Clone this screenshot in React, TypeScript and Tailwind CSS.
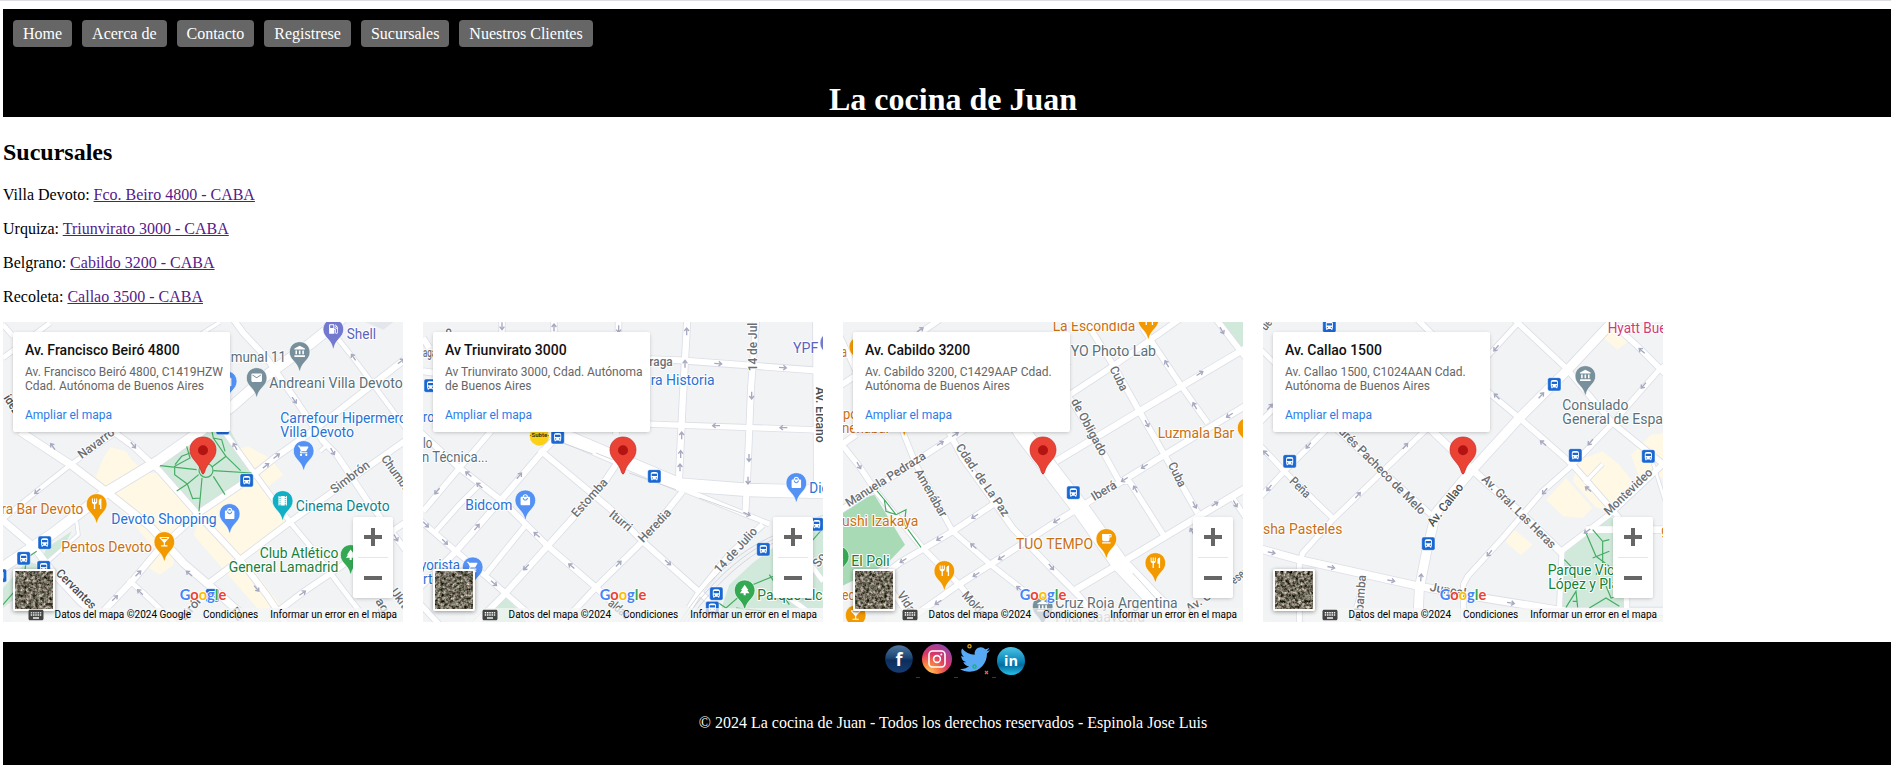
import React from "react";
import {
  MdAccountBalance,
  MdDirectionsBus,
  MdKeyboard,
  MdLocalBar,
  MdLocalCafe,
  MdLocalGasStation,
  MdLocalMall,
  MdMail,
  MdPark,
  MdRestaurant,
  MdShoppingCart,
  MdTheaters,
} from "react-icons/md";
import { FaTwitter } from "react-icons/fa";

type Road = [string, number];
type Street = [string, number, number, number, number, boolean?];
type Poi = [string, number, number, number, string];
type Pin = [string, number, number];
type Area = [string, string];

interface MapData {
  id: string;
  originX: number;
  title: string;
  address: string[];
  credit: string;
  seed: number;
  areas: Area[];
  paths: string[];
  rails?: string[];
  roads: Road[];
  arrows: [number, number, number][];
  streets: Street[];
  pois: Poi[];
  pins: Pin[];
  buses: [number, number][];
  marker: [number, number];
  subte?: [number, number];
}

const ORANGE = "#c96f12";
const BLUE = "#2872d6";
const SLATE = "#5b7079";
const GREEN = "#188038";
const TEAL = "#0f818c";
const YELLOW = "#fef8e5";
const PARK = "#d0e9da";

const ICONS: Record<string, [React.ComponentType<any>, string]> = {
  gas: [MdLocalGasStation, "#7379cf"],
  bank: [MdAccountBalance, "#78909c"],
  mail: [MdMail, "#78909c"],
  cart: [MdShoppingCart, "#5491f5"],
  mall: [MdLocalMall, "#5491f5"],
  film: [MdTheaters, "#12b0c4"],
  food: [MdRestaurant, "#f29900"],
  bar: [MdLocalBar, "#f29900"],
  cafe: [MdLocalCafe, "#f29900"],
  tree: [MdPark, "#34a853"],
};

const MAPS: MapData[] = [
  {
    id: "beiro",
    originX: 9,
    title: "Av. Francisco Beiró 4800",
    address: ["Av. Francisco Beiró 4800, C1419HZW", "Cdad. Autónoma de Buenos Aires"],
    credit: "Datos del mapa ©2024 Google",
    seed: 3,
    areas: [
      ["M330 388L378 400L395 425L440 465L478 465L590 585L530 640L520 740L480 770L430 740L470 700L350 560L300 510L285 480L310 420Z", YELLOW],
      ["M690 400L745 385L810 420L850 470L800 510L850 590L870 615L700 740L600 640L610 590L770 470Z", YELLOW],
      ["M600 600L740 730L840 860L780 880L640 720L580 650Z", YELLOW],
      ["M480 445L620 345L690 335L760 465L600 584Z", PARK],
      ["M110 755L140 690L215 640L190 690L150 715Z", PARK],
      ["M9 810L80 730L150 750L60 830L9 870Z", PARK],
      ["M1095 12H1180L1150 35Z", "#e3e7eb"],
    ],
    paths: [
      "M480 443L590 455M640 458L755 465M597 580L606 480M636 340L640 360L678 415L636 447M678 415L722 458M560 385L570 420L524 445L524 470L562 498L596 470M562 498L530 519M562 498L578 542L600 540M640 475L675 530M525 440L545 415L570 405M640 360L665 365L675 400",
      "M9 860L70 790L80 720L110 700",
    ],
    roads: [
      ["M-10 760L160 645L320 522L480 425L600 340L700 262L800 172L930 78L1040 -10", 30],
      ["M0 610L110 520L212 440L345 345L450 270", 13],
      ["M310 880L400 785L480 690L600 582L720 502L830 415L950 330L1220 120", 18],
      ["M620 800L720 725L870 612L1000 520L1220 365", 17],
      ["M820 890L910 822L1220 610", 17],
      ["M60 340L212 440L330 530L450 625L550 735L620 795L760 920", 22],
      ["M260 270L345 345L400 385L480 460L595 590L720 725L800 830L860 920", 17],
      ["M690 -10L730 45L800 120L890 250L970 370L1010 410L1100 545L1220 700", 17],
      ["M650 310L705 385L770 475L870 612L935 690L1040 830L1110 920", 14],
      ["M980 20L1060 120L1120 200L1220 335", 13],
      ["M0 600L100 685L160 765L240 850L320 920", 20],
      ["M385 785L430 825L530 920", 14],
      ["M9 120L150 15M9 20L40 55", 14],
      ["M600 50L660 12M960 400L985 378", 10],
      ["M230 610L235 650L150 725L80 790", 9],
    ],
    arrows: [[158, 385, -125], [400, 382, 50], [112, 520, 140], [705, 385, -120], [883, 247, 55], [1060, 117, -125], [1203, 130, -38], [798, 443, -38], [830, 414, -38], [998, 401, 60], [415, 766, -45], [345, 840, -45], [420, 822, -135], [567, 766, -140], [770, 812, 50], [908, 825, -35], [1188, 660, 60]],
    streets: [
      ["Navarro", 245, 424, 346, 348],
      ["Simbrón", 1003, 528, 1112, 446],
      ["Chumbi", 1142, 422, 1210, 517],
      ["Cervantes", 166, 768, 274, 876, true],
      ["idez", 10, 240, 42, 290, true],
      ["birón", 555, 910, 612, 842],
      ["agu", 1125, 850, 1160, 905],
      ["Ukra", 1170, 822, 1212, 880],
      ["Pe", 690, 880, 715, 912],
    ],
    pois: [
      ["Shell", 1040, 63, 88, "#5c63bd"],
      ["munal 11", 692, 132, 166, SLATE],
      ["Andreani Villa Devoto", 808, 210, 400, SLATE],
      ["Carrefour Hipermerc", 841, 315, 378, BLUE],
      ["Villa Devoto", 841, 357, 221, BLUE],
      ["Cinema Devoto", 887, 579, 282, TEAL],
      ["ra Bar Devoto", 4, 588, 246, ORANGE],
      ["Devoto Shopping", 334, 618, 316, BLUE],
      ["Pentos Devoto", 184, 702, 272, ORANGE],
      ["Club Atlético", 779, 720, 236, GREEN],
      ["General Lamadrid", 686, 762, 329, GREEN],
    ],
    pins: [["gas", 1000, 34], ["bank", 899, 102], ["mail", 770, 180], ["mall", 680, 190], ["cart", 911, 399], ["film", 848, 549], ["food", 290, 558], ["mall", 689, 588], ["bar", 493, 672], ["tree", 1052, 711]],
    buses: [[740, 487], [134, 674], [71, 721], [131, 748], [0, 773], [668, 330], [637, 832]],
    marker: [609, 397],
  },
  {
    id: "triunvirato",
    originX: 21,
    title: "Av Triunvirato 3000",
    address: ["Av Triunvirato 3000, Cdad. Autónoma", "de Buenos Aires"],
    credit: "Datos del mapa ©2024",
    seed: 11,
    areas: [
      ["M940 800L1010 735L1110 660L1230 610V870H1120L860 920H900Z", PARK],
      ["M262 830L320 890L330 912H210Z", PARK],
    ],
    paths: ["M1230 620L1110 760L1010 800L930 870L900 850M1060 770L1120 860M960 870L1050 880"],
    rails: [
      "M790 915C860 800 960 700 1080 650S1200 600 1230 588",
      "M800 915C870 810 965 710 1085 658S1200 612 1230 598",
      "M812 915C880 820 975 720 1090 666",
      "M440 375L530 408M540 405L590 425M640 465L780 515M850 540L990 590",
    ],
    roads: [
      ["M258 0V60M414 0V60M608 0L600 350", 17],
      ["M814 0L800 250L788 500", 19],
      ["M1021 0L1005 210L995 450L988 590", 18],
      ["M1207 0L1210 520", 32],
      ["M21 60L40 90M21 160L60 165M600 120L790 127L1210 158", 18],
      ["M600 315L1210 336", 16],
      ["M330 310L450 355L620 428L790 500L1000 516L1230 522", 38],
      ["M620 440L830 525L1060 618", 14],
      ["M21 580L130 450L225 340", 16],
      ["M55 645L130 560L185 505", 14],
      ["M10 810L120 700L260 540L380 400L440 340", 18],
      ["M170 925L260 835L395 684L560 500L600 440", 18],
      ["M430 925L540 808L680 670L800 520", 17],
      ["M820 870L850 822L940 710L1040 620", 17],
      ["M205 775L330 620", 15],
      ["M10 340L130 450L262 552L395 684L540 808L660 920", 17],
      ["M370 395L580 570L680 670L850 822L880 850", 17],
      ["M10 605L120 700L230 792L330 880L360 920", 16],
      ["M10 855L70 920", 16],
      ["M1120 840L1220 912M1170 720L1221 790", 14],
    ],
    arrows: [[258, 25, 90], [414, 28, -90], [608, 34, 90], [812, 40, -90], [907, 137, 3], [1101, 149, 3], [807, 137, -90], [1007, 233, 90], [900, 323, 180], [1102, 329, 180], [797, 352, -90], [794, 408, -90], [792, 448, -90], [999, 420, 90], [996, 488, 90], [310, 473, -50], [157, 468, -140], [190, 502, -140], [63, 520, 130], [183, 627, -50], [87, 672, 45], [362, 650, -140], [330, 748, 135], [466, 744, -140], [608, 737, -45], [756, 734, 42], [234, 796, 40], [993, 588, 25], [30, 620, 45]],
    streets: [
      ["14 de Jul", 1024, 160, 1024, 14],
      ["Av. Elcano", 1200, 207, 1200, 374, true],
      ["Estomba", 482, 600, 577, 495],
      ["Iturri", 577, 594, 636, 642],
      ["Heredia", 682, 676, 768, 586],
      ["14 de Julio", 910, 768, 1026, 642],
      ["raga", 700, 145, 770, 145],
      ["aga", 21, 118, 60, 118],
      ["aldas", 574, 860, 630, 905],
      ["P", 118, 50, 118, 30],
      ["So", 1208, 750, 1232, 715],
    ],
    pois: [
      ["YPF", 1131, 105, 76, "#5c63bd"],
      ["ra Historia", 704, 201, 192, BLUE],
      ["ro", 21, 311, 34, BLUE],
      ["lo", 21, 390, 28, SLATE],
      ["n Técnica...", 18, 432, 198, SLATE],
      ["Bidcom", 148, 576, 141, BLUE],
      ["Die", 1180, 525, 58, BLUE],
      ["yorista", 12, 757, 120, BLUE],
      ["rt", 21, 797, 28, BLUE],
      ["Parque Elca", 1024, 845, 218, GREEN],
    ],
    pins: [["gas", 1243, 75], ["mall", 328, 547], ["mall", 1141, 495], ["cart", 170, 748], ["tree", 986, 817]],
    buses: [[44, 203], [425, 358], [715, 475], [1042, 694], [1202, 619], [901, 827], [889, 870]],
    marker: [621, 397],
    subte: [370, 354],
  },
  {
    id: "cabildo",
    originX: 21,
    title: "Av. Cabildo 3200",
    address: ["Av. Cabildo 3200, C1429AAP Cdad.", "Autónoma de Buenos Aires"],
    credit: "Datos del mapa ©2024",
    seed: 21,
    areas: [
      ["M10 565L115 530L207 680L150 740L10 808Z", "#a8dab5"],
      ["M1160 12H1230V110Z", PARK],
    ],
    paths: ["M120 515L145 545L150 580L180 590L210 575L205 620L255 688M145 545L180 590"],
    roads: [
      ["M10 205L210 75L310 5", 17],
      ["M10 385L60 350M10 580L300 390L400 325L700 130", 17],
      ["M660 430L910 280L1230 90", 19],
      ["M640 270L830 145L1050 -10", 17],
      ["M60 835L190 735L350 640L470 560", 17],
      ["M210 912L360 805L490 722L660 612L760 550L990 408L1230 262", 18],
      ["M720 815L880 720L1080 600L1230 510", 20],
      ["M440 150L560 345L640 450L740 580L850 735L960 850L1010 925", 50],
      ["M200 340L240 440L350 640L470 745L560 815", 15],
      ["M340 345L380 420L530 630L640 745L730 835L790 912", 17],
      ["M670 190L800 400L850 490L880 490L985 655", 16],
      ["M740 -5L840 155L910 280L985 410L1085 585", 17],
      ["M920 30L1000 150L1040 210L1115 315", 16],
      ["M10 370L70 445L120 520L260 690L370 800L460 912", 16],
      ["M1130 -10L1230 120", 17],
      ["M1190 540L1230 600", 15],
      ["M10 50L60 160", 15],
      ["M150 790L230 912", 15],
      ["M860 740L1060 912", 13],
    ],
    rails: ["M890 765L990 875", "M570 12L560 0"],
    arrows: [[253, 35, -35], [1158, 38, 60], [992, 137, -120], [1092, 166, -32], [1076, 263, -120], [933, 317, 62], [1180, 292, 148], [358, 349, -32], [313, 376, -32], [69, 443, 60], [925, 445, 148], [865, 485, 148], [898, 513, -120], [1076, 561, 62], [1137, 558, -32], [1198, 558, 60], [416, 595, 148], [311, 661, 148], [662, 608, 148], [412, 684, -140], [496, 719, 148], [201, 728, 148], [420, 770, 148], [646, 747, 50], [306, 853, 148], [550, 812, -140], [1068, 640, -120]],
    streets: [
      ["Manuela Pedraza", 38, 568, 272, 420],
      ["Amenábar", 235, 462, 314, 600],
      ["Cdad. de La Paz", 358, 388, 502, 598],
      ["de Obligado", 704, 250, 794, 416],
      ["Cuba", 820, 152, 855, 222],
      ["Cuba", 995, 440, 1030, 510],
      ["Iberá", 775, 550, 845, 508],
      ["Vidal", 182, 830, 224, 895],
      ["Molde", 376, 834, 436, 900],
      ["Av. C", 1060, 885, 1128, 840],
      ["eses", 1195, 800, 1240, 765],
    ],
    pois: [
      ["La Escondida", 650, 38, 248, ORANGE],
      ["YO Photo Lab", 704, 114, 256, SLATE],
      ["Luzmala Bar", 965, 360, 230, ORANGE],
      ["a", 16, 117, 17, ORANGE],
      ["po", 21, 303, 44, ORANGE],
      ["nenábar", 18, 345, 145, ORANGE],
      ["ushi Izakaya", 18, 624, 229, ORANGE],
      ["TUO TEMPO", 540, 693, 231, ORANGE],
      ["El Poli", 46, 744, 115, GREEN],
      ["ed", 18, 845, 40, ORANGE],
      ["Cruz Roja Argentina", 658, 870, 367, SLATE],
      ["Pilar Saavedra", 658, 912, 270, "#9aa7ad"],
    ],
    pins: [["food", 937, 6], ["food", 70, 87], ["food", 205, 295], ["food", 1235, 330], ["cafe", 811, 663], ["food", 958, 735], ["food", 325, 759], ["tree", 8, 716], ["bar", 59, 892], ["bank", 620, 866]],
    buses: [[712, 524]],
    marker: [621, 397],
  },
  {
    id: "callao",
    originX: 21,
    title: "Av. Callao 1500",
    address: ["Av. Callao 1500, C1024AAN Cdad.", "Autónoma de Buenos Aires"],
    credit: "Datos del mapa ©2024",
    seed: 34,
    areas: [
      ["M1060 12L1130 60L1085 95L1030 50Z", YELLOW],
      ["M970 425L1040 400L1090 440L1130 490L1060 575L1020 570L950 490Z", YELLOW],
      ["M1125 410L1185 350L1230 345V480H1150Z", YELLOW],
      ["M870 545L930 480L1010 570L980 600L920 595Z", YELLOW],
      ["M775 635L830 680L795 712L748 672Z", YELLOW],
      ["M922 708L1050 602L1090 595L1104 870H920Z", PARK],
    ],
    paths: ["M990 645L1020 715L1060 745M1010 635L1040 670L1060 665M1040 670L1040 740L1020 770M925 725L960 760M1040 780L1065 840L1100 830M930 868L960 820L965 868M1000 870L1050 840L1090 865M1010 720L1060 700M950 850H965"],
    roads: [
      ["M1085 -5L940 150L790 300L640 465L540 585L512 700L490 810L485 925", 27],
      ["M10 315L90 235M10 540L85 460L210 335", 15],
      ["M130 925V740L140 705L230 605L370 470L510 335", 15],
      ["M622 925V800L635 775L740 660L860 520L950 440L1070 315L1210 155L1230 140", 15],
      ["M690 120L800 0", 14],
      ["M915 700L1060 590L1230 430", 16],
      ["M480 0L560 80L700 225L790 300L950 440L1090 600", 16],
      ["M770 0L930 150L1070 315L1230 445", 16],
      ["M1040 -10L1140 80L1210 150L1230 170", 16],
      ["M10 380L90 465L235 605", 15],
      ["M220 315L525 590", 15],
      ["M520 330L660 465L800 590L918 705", 21],
      ["M10 692L130 725L490 805L700 843L930 880L1230 880", 22],
      ["M918 700L910 880L910 925", 15],
      ["M990 635H1230", 20],
      ["M1112 830V925", 16],
      ["M10 90L60 140", 13],
      ["M300 870L330 770", 12],
      ["M985 495L1040 438", 10],
      ["M1180 400L1230 560", 8],
    ],
    arrows: [[720, 91, 130], [1157, 98, -140], [1162, 203, 130], [856, 232, -48], [722, 235, -135], [42, 266, -48], [157, 383, 130], [448, 384, -48], [861, 375, -140], [1003, 373, 130], [30, 406, -135], [39, 510, 130], [306, 531, -48], [866, 520, 130], [996, 513, -140], [700, 706, 130], [993, 640, 145], [47, 704, 12], [226, 748, 12], [406, 788, 10], [495, 778, -85], [765, 855, 10]],
    streets: [
      ["drés Pacheco de Melo", 246, 342, 494, 592],
      ["Peña", 98, 492, 150, 542],
      ["Av. Callao", 532, 628, 624, 508, true],
      ["Av. Gral. Las Heras", 675, 486, 885, 694],
      ["Montevideo", 1058, 594, 1192, 466],
      ["bamba", 322, 880, 330, 772],
      ["Juncal", 520, 818, 628, 838],
      ["ue", 30, 40, 50, 14],
      ["ri", 314, 912, 318, 890],
    ],
    pois: [
      ["Hyatt Bue", 1055, 45, 176, "#d03b79"],
      ["Consulado", 919, 276, 198, SLATE],
      ["General de Espa", 919, 318, 302, SLATE],
      ["sha Pasteles", 21, 648, 238, ORANGE],
      ["Parque Vice", 875, 771, 222, GREEN],
      ["López y Pla", 877, 813, 212, GREEN],
      ["g", 1216, 650, 22, ORANGE],
    ],
    pins: [["bank", 988, 174]],
    buses: [[220, 24], [895, 199], [958, 412], [1177, 415], [101, 430], [517, 677]],
    marker: [621, 397],
  },
];

function Halo({ children, ...rest }: React.SVGProps<SVGTextElement>) {
  return (
    <text stroke="#ffffff" strokeWidth={6} strokeLinejoin="round" paintOrder="stroke" lengthAdjust="spacingAndGlyphs" {...rest}>
      {children}
    </text>
  );
}

function StreetLabel({ street }: { street: Street }) {
  const [name, x1, y1, x2, y2, bold] = street;
  const angle = (Math.atan2(y2 - y1, x2 - x1) * 180) / Math.PI;
  return (
    <Halo
      transform={`translate(${x1} ${y1}) rotate(${angle})`}
      textLength={Math.hypot(x2 - x1, y2 - y1)}
      fontSize={37}
      fill={bold ? "#4a4e52" : "#6b6f73"}
      fontWeight={500}
    >
      {name}
    </Halo>
  );
}

function PlacePin({ pin }: { pin: Pin }) {
  const [kind, x, y] = pin;
  const [Icon, color] = ICONS[kind];
  return (
    <g transform={`translate(${x} ${y})`}>
      <path
        d="M0-31C18-31 31-17 31 0C31 24 8 28 2 55Q0 60-2 55C-8 28-31 24-31 0C-31-17-18-31 0-31Z"
        fill={color}
        stroke="#ffffff"
        strokeWidth={2}
      />
      <Icon x={-19} y={-20} size={38} color="#ffffff" />
    </g>
  );
}

function StreetMap({ map }: { map: MapData }) {
  return (
    <svg className="block h-[300px] w-[400px] font-[Roboto,sans-serif]" viewBox={`${map.originX} 12 1200 900`}>
      <rect x={0} y={0} width={1240} height={930} fill="#f1f3f5" />
      {map.areas.map(([d, fill], i) => (
        <path key={i} d={d} fill={fill} />
      ))}
      {map.roads.map(([d, w], i) => (
        <path key={i} d={d} fill="none" stroke="#dcdfe6" strokeWidth={w + 5} strokeLinejoin="round" />
      ))}
      {map.roads.map(([d, w], i) => (
        <path key={i} d={d} fill="none" stroke="#ffffff" strokeWidth={w} strokeLinejoin="round" />
      ))}
      {map.rails?.map((d, i) => (
        <path key={i} d={d} fill="none" stroke="#d3d7dc" strokeWidth={3} />
      ))}
      {map.paths.map((d, i) => (
        <path key={i} d={d} fill="none" stroke="#45ac64" strokeWidth={3.5} />
      ))}
      {map.id === "beiro" && <circle cx={618} cy={457} r={21} fill={PARK} stroke="#45ac64" strokeWidth={3.5} />}
      {map.arrows.map(([x, y, a], i) => (
        <path
          key={i}
          transform={`translate(${x} ${y}) rotate(${a})`}
          d="M-12 0H8M1-7L10 0L1 7"
          fill="none"
          stroke="#a6a9c0"
          strokeWidth={4}
        />
      ))}
      {map.streets.map((s, i) => (
        <StreetLabel key={i} street={s} />
      ))}
      {map.buses.map(([x, y], i) => (
        <g key={i} transform={`translate(${x} ${y})`}>
          <rect x={-20} y={-20} width={40} height={40} rx={6} fill="#1967d2" stroke="#ffffff" strokeWidth={1.5} />
          <MdDirectionsBus x={-16} y={-16} size={32} color="#ffffff" />
        </g>
      ))}
      {map.subte && (
        <g transform={`translate(${map.subte[0]} ${map.subte[1]})`}>
          <circle r={29} fill="#fbd116" />
          <text textAnchor="middle" y={3} fontSize={18} fontWeight={700} fill="#3b3515">
            ·Subte·
          </text>
        </g>
      )}
      {map.pins.map((p, i) => (
        <PlacePin key={i} pin={p} />
      ))}
      {map.pois.map(([name, x, y, w, color], i) => (
        <Halo key={i} x={x} y={y} textLength={w} fontSize={42} fill={color}>
          {name}
        </Halo>
      ))}
      <g transform={`translate(${map.marker[0]} ${map.marker[1]})`}>
        <path
          d="M0-40C23-40 39-23 39-1C39 28 12 34 4 67Q0 76-4 67C-12 34-39 28-39-1C-39-23-23-40 0-40Z"
          fill="#ea4335"
          stroke="#c5221f"
          strokeWidth={2}
        />
        <circle r={15} fill="#b31412" />
      </g>
      <text
        x={map.originX + 530}
        y={847}
        fontSize={47}
        fontWeight={700}
        textLength={140}
        lengthAdjust="spacingAndGlyphs"
        className="font-[Lato,sans-serif]"
        stroke="#ffffff"
        strokeWidth={5}
        paintOrder="stroke"
      >
        <tspan fill="#4285f4">G</tspan>
        <tspan fill="#ea4335">o</tspan>
        <tspan fill="#fbbc04">o</tspan>
        <tspan fill="#4285f4">g</tspan>
        <tspan fill="#34a853">l</tspan>
        <tspan fill="#ea4335">e</tspan>
      </text>
    </svg>
  );
}

function Satellite({ id, seed }: { id: string; seed: number }) {
  return (
    <svg className="block h-[38px] w-[38px]" viewBox="0 0 38 38">
      <filter id={`aerial-${id}`} x="0" y="0" width="100%" height="100%" colorInterpolationFilters="sRGB">
        <feTurbulence type="fractalNoise" baseFrequency="0.34" numOctaves={4} seed={seed} />
        <feColorMatrix
          type="matrix"
          values="1.2 0.3 0 0 -0.31  1.1 0.4 0 0 -0.33  1.15 0.3 0 0 -0.36  0 0 0 0 1"
        />
      </filter>
      <rect width="38" height="38" fill="#77756a" />
      <rect width="38" height="38" filter={`url(#aerial-${id})`} />
    </svg>
  );
}

function MapFrame({ map }: { map: MapData }) {
  return (
    <section className="relative h-[300px] w-[400px] overflow-hidden font-[Roboto,sans-serif]">
      <StreetMap map={map} />
      <div className="absolute top-[10px] left-[10px] h-[100px] w-[217px] overflow-hidden rounded-[2px] bg-white pt-[9px] pl-3 shadow-[0_1px_4px_-1px_rgba(0,0,0,0.3)]">
        <h3 className="text-[14px] leading-[18px] font-medium whitespace-nowrap text-[#111111]">{map.title}</h3>
        <p className="mt-[6px] text-[12px] leading-[14px] whitespace-nowrap text-[#666666]">
          {map.address[0]}
          <br />
          {map.address[1]}
        </p>
        <a className="mt-[15px] block text-[12px] leading-[14px] text-[#2b7de9]">Ampliar el mapa</a>
      </div>
      <div className="absolute right-0 bottom-0 flex h-[14px] items-center bg-[#f5f5f5]/70 pr-[6px] text-[10px] leading-[14px] whitespace-nowrap text-black">
        <div className="ml-[4px] h-[14px] w-[40px]" />
        <span className="mr-[12px]">{map.credit}</span>
        <span className="mr-[12px]">Condiciones</span>
        <span>Informar un error en el mapa</span>
      </div>
      <div className="absolute top-[247px] left-[10px] rounded-[2px] border-2 border-white shadow-[0_1px_4px_rgba(0,0,0,0.4)]">
        <Satellite id={map.id} seed={map.seed} />
      </div>
      <div className="absolute right-0 bottom-0 flex h-[14px] items-center pr-[6px] text-[10px] leading-[14px] whitespace-nowrap">
        <MdKeyboard size={18} color="#444444" />
        <div className={map.id === "beiro" ? "w-[352px]" : "w-[318px]"} />
      </div>
      <div className="absolute top-[195px] right-[10px] flex h-[81px] w-[40px] flex-col items-center rounded-[2px] bg-white shadow-[0_1px_4px_-1px_rgba(0,0,0,0.3)]">
        <svg className="h-[40px] w-[40px]" viewBox="0 0 40 40">
          <path d="M11 20H29M20 11V29" stroke="#666666" strokeWidth="4" />
        </svg>
        <div className="h-px w-[30px] bg-[#e6e6e6]" />
        <svg className="h-[40px] w-[40px]" viewBox="0 0 40 40">
          <path d="M11 20H29" stroke="#666666" strokeWidth="4" />
        </svg>
      </div>
    </section>
  );
}

const NAV = ["Home", "Acerca de", "Contacto", "Registrese", "Sucursales", "Nuestros Clientes"];

const BRANCHES = [
  ["Villa Devoto", "Fco. Beiro 4800 - CABA"],
  ["Urquiza", "Triunvirato 3000 - CABA"],
  ["Belgrano", "Cabildo 3200 - CABA"],
  ["Recoleta", "Callao 3500 - CABA"],
];

function Socials() {
  return (
    <svg className="ml-[3px] h-[36px] w-[142px]" viewBox="883 643 142 36">
      <defs>
        <linearGradient id="fb" x1="0" y1="0" x2="0" y2="1">
          <stop offset="0" stopColor="#50779f" />
          <stop offset="0.45" stopColor="#1d4674" />
          <stop offset="0.55" stopColor="#0c2e5c" />
          <stop offset="1" stopColor="#143d73" />
        </linearGradient>
        <radialGradient id="ig" cx="0.2" cy="1" r="1.15">
          <stop offset="0" stopColor="#ffd466" />
          <stop offset="0.3" stopColor="#f98042" />
          <stop offset="0.6" stopColor="#dc3567" />
          <stop offset="1" stopColor="#8a48b4" />
        </radialGradient>
        <linearGradient id="li" x1="0" y1="0" x2="0" y2="1">
          <stop offset="0" stopColor="#4ec4e4" />
          <stop offset="0.5" stopColor="#0b86ba" />
          <stop offset="0.65" stopColor="#056c9f" />
          <stop offset="1" stopColor="#25c3ea" />
        </linearGradient>
      </defs>
      <circle cx="898" cy="659" r="13.8" fill="url(#fb)" />
      <text x="898" y="665.5" textAnchor="middle" fontSize="18" fontWeight="700" fill="#ffffff" className="font-[Open_Sans,sans-serif]">
        f
      </text>
      <circle cx="936" cy="659" r="15" fill="url(#ig)" />
      <rect x="928" y="651" width="16" height="16" rx="3.5" fill="none" stroke="#ffffff" strokeWidth="1.6" />
      <circle cx="936" cy="659" r="3.4" fill="none" stroke="#ffffff" strokeWidth="1.6" />
      <circle cx="940.3" cy="654.5" r="1" fill="#ffffff" />
      <FaTwitter x={959} y={644.5} size={30} color="#58a9f5" />
      <circle cx="968.5" cy="646.3" r="1.6" fill="none" stroke="#d8a514" strokeWidth="1.3" />
      <circle cx="973.5" cy="666.6" r="1.6" fill="none" stroke="#18b56b" strokeWidth="1.3" />
      <path d="M984 671L987 674M987 671L984 674" stroke="#e05a5a" strokeWidth="1.3" />
      <circle cx="1010" cy="661" r="14" fill="url(#li)" />
      <text x="1010" y="666" textAnchor="middle" fontSize="14.5" fontWeight="700" fill="#ffffff" className="font-[Open_Sans,sans-serif]">
        in
      </text>
      <path d="M915 677.5H919M953 677.5H957M991 677.5H995" stroke="#551a8b" />
    </svg>
  );
}

export default function App() {
  return (
    <div className="h-[765px] w-full overflow-hidden border-t border-[#dedee2] bg-white pl-[3px] font-['Liberation_Serif',serif] text-[16px] leading-[18px] text-black">
      <div className="w-[1900px] pt-2">
        <header className="h-[108px] bg-black text-white">
          <nav className="flex gap-[10px] px-[10px] pt-[11px]">
            {NAV.map((item) => (
              <a key={item} className="h-[27px] rounded-[4px] bg-[#666666] px-[10px] pt-[5px]">
                {item}
              </a>
            ))}
          </nav>
          <h1 className="mt-[34px] text-center text-[32px] leading-[36px] font-bold">La cocina de Juan</h1>
        </header>
        <main>
          <h2 className="mt-[21px] text-[24px] leading-[28px] font-bold">Sucursales</h2>
          <div className="mt-5 flex flex-col gap-4">
            {BRANCHES.map(([name, address]) => (
              <p key={name}>
                {name}: <a className="text-[#551a8b] underline">{address}</a>
              </p>
            ))}
          </div>
          <div className="mt-4 flex gap-5">
            {MAPS.map((map) => (
              <MapFrame key={map.id} map={map} />
            ))}
          </div>
        </main>
        <footer className="mt-5 flex h-[123px] flex-col items-center bg-black pt-px text-white">
          <Socials />
          <p className="mt-[35px]">© 2024 La cocina de Juan - Todos los derechos reservados - Espinola Jose Luis</p>
        </footer>
      </div>
    </div>
  );
}
